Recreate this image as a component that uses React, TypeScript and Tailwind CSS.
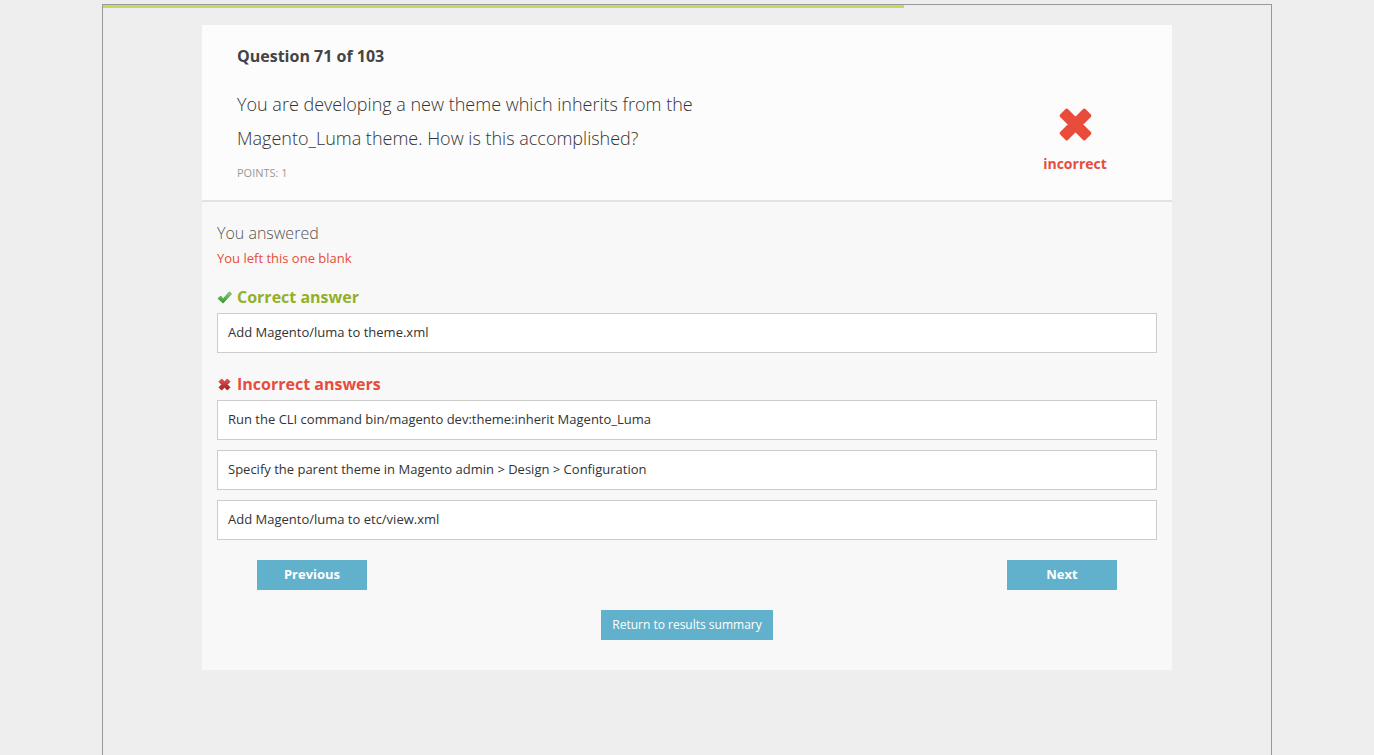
const font = { fontFamily: '"Open Sans", "Noto Sans", sans-serif' }

const BigX = ({ className }: { className?: string }) => (
  <svg viewBox="0 0 32 32" className={className}>
    <path
      d="M3 8 L8 3 L16 11 L24 3 L29 8 L21 16 L29 24 L24 29 L16 21 L8 29 L3 24 L11 16 Z"
      fill="currentColor"
      stroke="currentColor"
      strokeWidth="3"
      strokeLinejoin="round"
    />
  </svg>
)

const Check = () => (
  <svg viewBox="0 0 16 16" className="h-[15px] w-[15px]">
    <defs>
      <linearGradient id="chk" x1="0" y1="0" x2="0" y2="1">
        <stop offset="0" stopColor="#86d873" />
        <stop offset="1" stopColor="#2a9a2a" />
      </linearGradient>
    </defs>
    <path d="M1 9 L4 6.5 L6.5 9.5 L13 2 L15.5 4 L6.5 14 Z" fill="url(#chk)" stroke="#2a8a2a" strokeWidth="0.6" strokeLinejoin="round" />
  </svg>
)

const SmallX = () => (
  <svg viewBox="0 0 16 16" className="h-[15px] w-[15px]">
    <defs>
      <linearGradient id="sx" x1="0" y1="0" x2="0" y2="1">
        <stop offset="0" stopColor="#e05a5a" />
        <stop offset="1" stopColor="#a81c1c" />
      </linearGradient>
    </defs>
    <path
      d="M2 5 L5 2 L8 5 L11 2 L14 5 L11 8 L14 11 L11 14 L8 11 L5 14 L2 11 L5 8 Z"
      fill="url(#sx)"
      stroke="#9a1a1a"
      strokeWidth="0.6"
      strokeLinejoin="round"
    />
  </svg>
)

const Answer = ({ text }: { text: string }) => (
  <div className="flex h-10 items-center border border-[#cccccc] bg-white px-[10px] text-[13px] text-[#333333]">
    {text}
  </div>
)

export default function App() {
  return (
    <div className="min-h-[755px] bg-[#eeeeee] px-[102px] pt-1" style={font}>
      <div className="relative min-h-[751px] border-x border-t border-[#999999] bg-[#eeeeee] px-[99px] pt-[20px]">
        <div className="absolute top-0 left-0 h-[3px] w-[801px] bg-[#c8d862]" />
        <div className="w-[970px]">
          <div className="flex border-b-2 border-[#e2e2e2] bg-[#fcfcfc] px-[35px] pt-[19px] pb-[18px]">
            <div className="flex-1">
              <h2 className="text-[16px] leading-[24px] font-bold text-[#444444]">Question 71 of 103</h2>
              <p className="mt-[19px] text-[18px] leading-[34px] font-light text-[#333333]">
                You are developing a new theme which inherits from the
                <br />
                Magento_Luma theme. How is this accomplished?
              </p>
              <div className="mt-[10px] text-[11px] text-[#999999]">POINTS: 1</div>
            </div>
            <div className="mr-[12px] flex w-[100px] flex-col items-center pt-[63px]">
              <BigX className="h-[35px] w-[35px] text-[#e74c3c]" />
              <div className="mt-[12px] text-[14px] leading-[19px] font-bold text-[#e74c3c]">incorrect</div>
            </div>
          </div>
          <div className="bg-[#f8f8f8] px-[15px] pt-[20px] pb-[30px]">
            <div className="text-[16px] leading-[22px] font-light text-[#555555]">You answered</div>
            <div className="mt-[5px] text-[13px] text-[#e74c3c]">You left this one blank</div>
            <div className="mt-[18px] flex items-center gap-[5px]">
              <Check />
              <span className="text-[16px] leading-[22px] font-bold text-[#93b02b]">Correct answer</span>
            </div>
            <div className="mt-[5px]">
              <Answer text="Add Magento/luma to theme.xml" />
            </div>
            <div className="mt-[20px] flex items-center gap-[5px]">
              <SmallX />
              <span className="text-[16px] leading-[22px] font-bold text-[#e74c3c]">Incorrect answers</span>
            </div>
            <div className="mt-[5px] flex flex-col gap-[10px]">
              <Answer text="Run the CLI command bin/magento dev:theme:inherit Magento_Luma" />
              <Answer text="Specify the parent theme in Magento admin > Design > Configuration" />
              <Answer text="Add Magento/luma to etc/view.xml" />
            </div>
            <div className="mt-[20px] flex justify-between px-[40px]">
              <button className="h-[30px] w-[110px] bg-[#62b1cc] text-[13px] font-bold text-white">Previous</button>
              <button className="h-[30px] w-[110px] bg-[#62b1cc] text-[13px] font-bold text-white">Next</button>
            </div>
            <div className="mt-[20px] flex justify-center">
              <button className="h-[30px] w-[172px] bg-[#62b1cc] text-[12px] text-white">Return to results summary</button>
            </div>
          </div>
        </div>
      </div>
    </div>
  )
}
